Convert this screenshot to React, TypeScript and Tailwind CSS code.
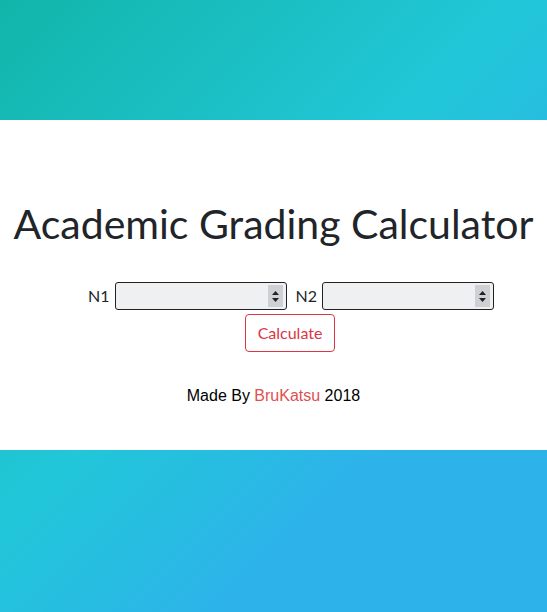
export default function App() {
  const fields = ['N1', 'N2']

  return (
    <div className="min-h-screen flex flex-col bg-[linear-gradient(135deg,#12b5a9_0%,#21c7d8_45%,#2db3ea_72%,#2db3ea_100%)]">
      {/* top band */}
      <div className="h-[120px]" />

      {/* main card */}
      <div className="h-[330px] bg-white flex flex-col items-center pt-[80px]">
        <h1 className="whitespace-nowrap text-center text-[41px] leading-[48px] text-[#212529] font-['Lato',sans-serif]">
          Academic Grading Calculator
        </h1>

        <div className="mt-[34px] pl-[35px] flex items-center gap-[9px] font-['Lato',sans-serif]">
          {fields.map(label => (
            <div key={label} className="flex items-center gap-[5px]">
              <span className="text-[16px] text-[#212529]">{label}</span>
              <div className="w-[172px] h-[28px] flex items-center bg-[#eff0f2] border border-[#222] rounded-[3px] pr-[3px]">
                <input type="text" className="flex-1 min-w-0 h-full bg-transparent outline-none px-2" />
                <div className="w-[15px] h-[22px] bg-[#cfd0d3] flex flex-col items-center justify-center gap-[3px]">
                  <svg width="7" height="4" viewBox="0 0 7 4">
                    <path d="M0 4 L3.5 0 L7 4 Z" fill="#222" />
                  </svg>
                  <svg width="7" height="4" viewBox="0 0 7 4">
                    <path d="M0 0 L3.5 4 L7 0 Z" fill="#222" />
                  </svg>
                </div>
              </div>
            </div>
          ))}
        </div>

        <button className="mt-[4px] ml-[33px] w-[90px] h-[38px] border border-[#dc3545] rounded-[4px] text-[#dc3545] text-[16px] font-['Lato',sans-serif]">
          Calculate
        </button>

        <p className="mt-[32px] text-[16px] text-black font-['Liberation_Sans',Arial,sans-serif]">
          Made By <span className="text-[#e0504f]">BruKatsu</span> 2018
        </p>
      </div>

      <div className="flex-1" />
    </div>
  )
}
